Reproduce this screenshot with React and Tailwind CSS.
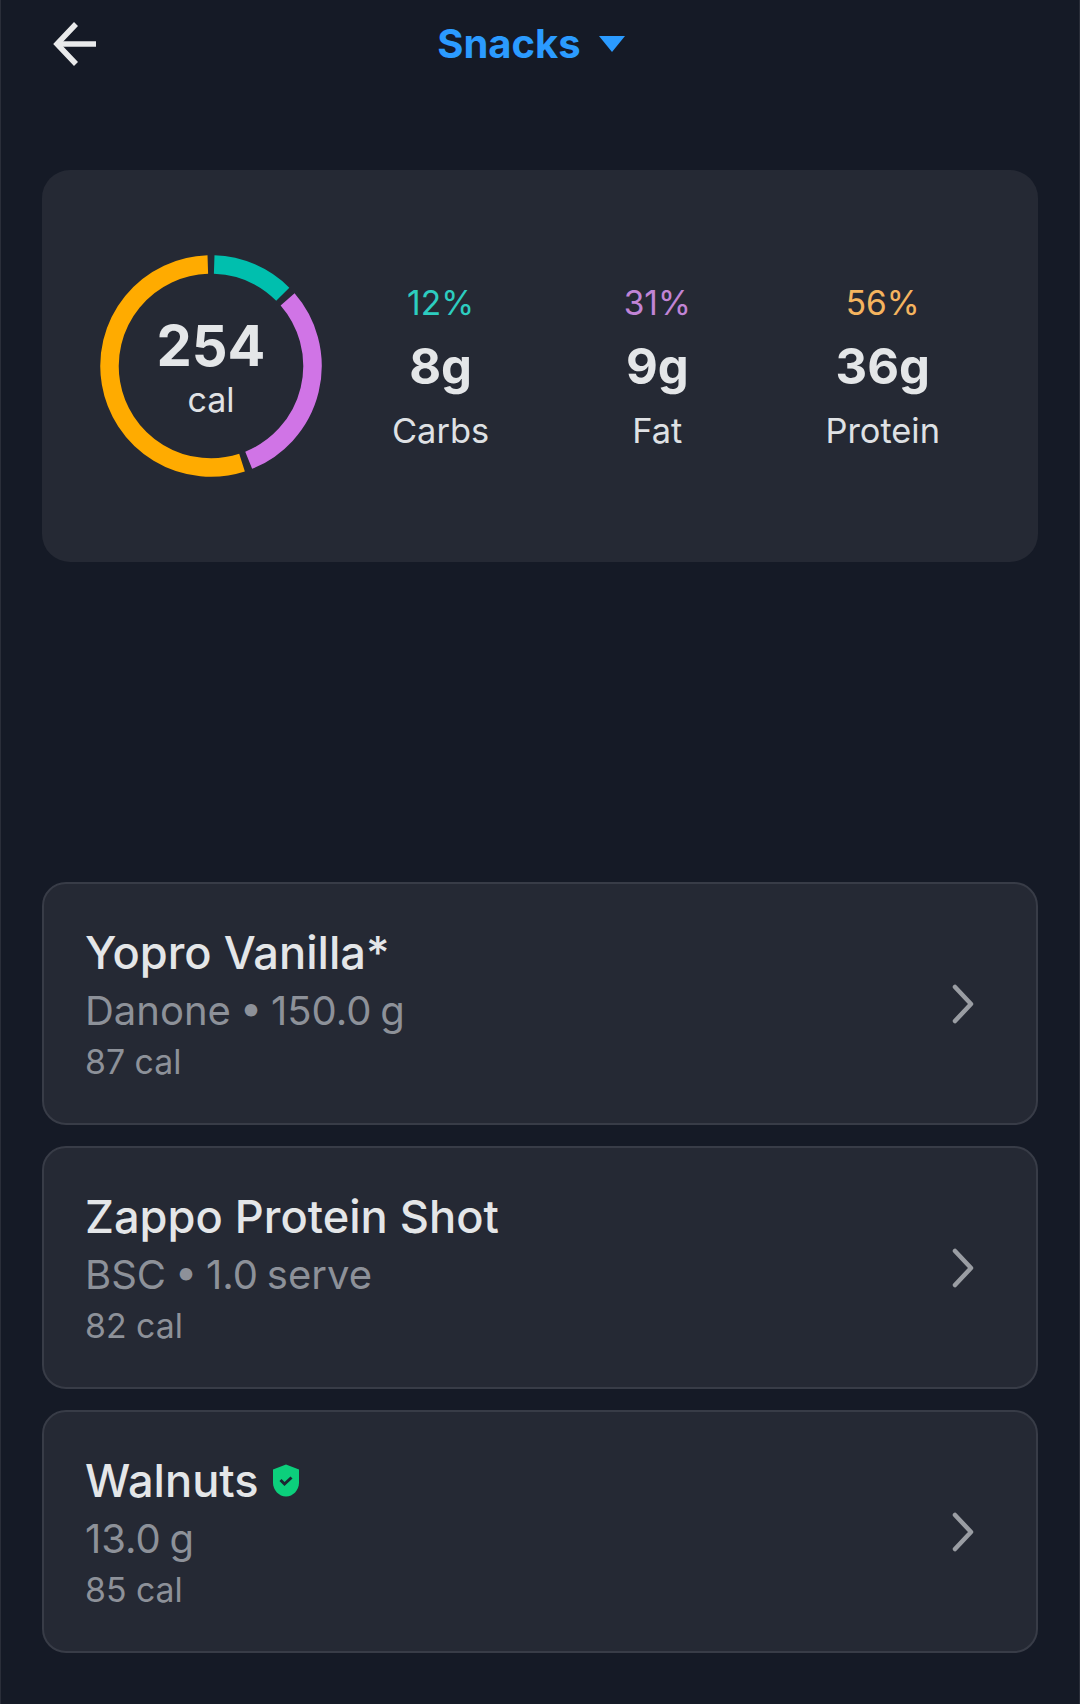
const arc = (a0, a1, r = 101.5, c = 111) => {
  const p = (a) => {
    const t = (a * Math.PI) / 180;
    return `${(c + r * Math.sin(t)).toFixed(2)} ${(c - r * Math.cos(t)).toFixed(2)}`;
  };
  return `M${p(a0)}A${r} ${r} 0 ${a1 - a0 > 180 ? 1 : 0} 1 ${p(a1)}`;
};

function Ring() {
  return (
    <div className="relative w-[222px] h-[222px] shrink-0">
      <svg width="222" height="222" viewBox="0 0 222 222" fill="none" strokeWidth="18.5">
        <path d={arc(1.8, 45)} stroke="#00bfae" />
        <path d={arc(49, 158.2)} stroke="#d074e6" />
        <path d={arc(162.2, 358.2)} stroke="#ffab00" />
      </svg>
      <div className="absolute inset-0 flex flex-col items-center justify-center">
        <span className="text-[56px] leading-[60px] font-bold text-[#e4e6e8] mt-[2px]">254</span>
        <span className="text-[34px] leading-[38px] text-[#e0e2e5] mt-[5px]">cal</span>
      </div>
    </div>
  );
}

function Stat({ pct, pctClass, grams, label }) {
  return (
    <div className="flex flex-col items-center mt-[2px]">
      <span className={`text-[33.5px] leading-[40px] ${pctClass}`}>{pct}</span>
      <span className="text-[49px] leading-[56px] font-bold text-[#e4e6e8] mt-[16px]">{grams}</span>
      <span className="text-[34.4px] leading-[40px] text-[#dfe1e4] mt-[16px]">{label}</span>
    </div>
  );
}

function Row({ title, badge, sub, cal }) {
  return (
    <div className="h-[243px] rounded-[24px] border-2 border-[#383c47] bg-[#252934] pl-[41px] pr-[60px] flex items-center justify-between">
      <div className="flex flex-col">
        <div className="flex items-center gap-[13px] h-[58px] mt-[1px]">
          <span className="text-[45.2px] leading-[58px] font-medium text-[#e4e6e8]">{title}</span>
          {badge && (
            <svg width="28" height="33" viewBox="0 0 28 33">
              <path d="M14 0.5 L27 5.5 V19 C27 26 21 32.5 14 32.5 C7 32.5 1 26 1 19 V5.5 Z" fill="#0ccf7c" />
              <path d="M8.5 16 L12.5 20 L19.5 13.5" fill="none" stroke="#1c2733" strokeWidth="3" />
            </svg>
          )}
        </div>
        <span className="text-[40px] leading-[54px] text-[#8d9199] mt-[2px] [word-spacing:-2.5px]">{sub}</span>
        <span className="text-[33.8px] leading-[46px] text-[#8d9199] mt-[1px]">{cal}</span>
      </div>
      <svg width="26" height="42" viewBox="0 0 26 42" fill="none" stroke="#9a9da3" strokeWidth="4.5" strokeLinecap="round" strokeLinejoin="round">
        <path d="M5 4 L21 21 L5 38" />
      </svg>
    </div>
  );
}

export default function App() {
  return (
    <div className="w-[1080px] h-[1704px] bg-[#151a26] border-x border-[#2a2e39] px-[41px] font-['Inter',sans-serif] overflow-hidden">
      <header className="relative h-[88px] flex items-center justify-center">
        <svg className="absolute left-[11px] top-[21px]" width="46" height="46" viewBox="0 0 46 46" fill="none" stroke="#e9eaeb" strokeWidth="5.5">
          <path d="M43 23 H4" />
          <path d="M23 3 L4 23 L23 43" />
        </svg>
        <div className="flex items-center gap-[18px] ml-[-18px]">
          <span className="text-[40px] leading-[50px] font-bold text-[#2b9bff]">Snacks</span>
          <svg width="26" height="16" viewBox="0 0 26 16">
            <path d="M0 0 H26 L13 16 Z" fill="#2b9bff" />
          </svg>
        </div>
      </header>
      <section className="mt-[82px] h-[392px] rounded-[28px] bg-[#252934] flex items-center pl-[58px] pr-[98px]">
        <Ring />
        <div className="flex-1 flex justify-between ml-[70px]">
          <Stat pct="12%" pctClass="text-[#2dcdc0]" grams="8g" label="Carbs" />
          <Stat pct="31%" pctClass="text-[#c184d6]" grams="9g" label="Fat" />
          <Stat pct="56%" pctClass="text-[#f5b45f]" grams="36g" label="Protein" />
        </div>
      </section>
      <section className="mt-[320px] flex flex-col gap-[21px]">
        <Row title="Yopro Vanilla*" sub="Danone • 150.0 g" cal="87 cal" />
        <Row title="Zappo Protein Shot" sub="BSC • 1.0 serve" cal="82 cal" />
        <Row title="Walnuts" badge sub="13.0 g" cal="85 cal" />
      </section>
    </div>
  );
}
